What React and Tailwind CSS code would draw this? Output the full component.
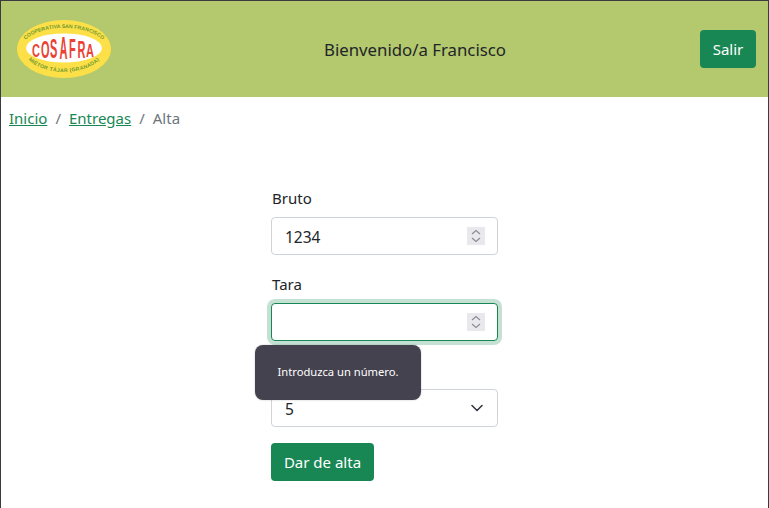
import React from "react";

const font = { fontFamily: '"Noto Sans", "Open Sans", sans-serif' };

const letters = [
  { c: "C", x: 16, y: 37.5, h: 13 },
  { c: "O", x: 25, y: 38.5, h: 17 },
  { c: "S", x: 34, y: 39, h: 20 },
  { c: "A", x: 43.5, y: 39.5, h: 22 },
  { c: "F", x: 53, y: 39, h: 20 },
  { c: "R", x: 61.5, y: 38.5, h: 17 },
  { c: "A", x: 70, y: 37.5, h: 13 },
];

function Logo() {
  return (
    <svg width="96" height="60" viewBox="0 0 96 60" className="block shrink-0">
      <defs>
        <path id="logoTop" d="M 6 29 A 42 20 0 0 1 90 29" fill="none" />
        <path id="logoBottom" d="M 8 30 A 40 23 0 0 0 88 30" fill="none" />
      </defs>
      <ellipse cx="48" cy="30" rx="47" ry="29" fill="#fde048" />
      <ellipse cx="48" cy="29" rx="38" ry="14.5" fill="#ffffff" />
      <text fontFamily="Liberation Sans, sans-serif" fontSize="5.2" fontWeight="700" fill="#6f9a30">
        <textPath href="#logoTop" startOffset="50%" textAnchor="middle">COOPERATIVA SAN FRANCISCO</textPath>
      </text>
      <text fontFamily="Liberation Sans, sans-serif" fontSize="5.2" fontWeight="700" fill="#6f9a30" letterSpacing="0.3">
        <textPath href="#logoBottom" startOffset="50%" textAnchor="middle">MIÉTOR TÁJAR (GRANADA)</textPath>
      </text>
      {letters.map((l, i) => (
        <text
          key={i}
          transform={`translate(${l.x} ${l.y}) scale(1.1 ${l.h / 7.16})`}
          fontFamily="Liberation Sans, sans-serif"
          fontSize="10"
          fontWeight="700"
          fill="#ea4335"
        >
          {l.c}
        </text>
      ))}
    </svg>
  );
}

function Spinner() {
  return (
    <span className="absolute right-[13px] top-[10px] flex h-[18px] w-[18px] items-center justify-center bg-[#e9e9ed] pointer-events-none">
      <svg width="12" height="14" viewBox="0 0 12 14" fill="none" stroke="#8a8a94" strokeWidth="1.1">
        <path d="M2 5 L6 1.5 L10 5" />
        <path d="M2 9 L6 12.5 L10 9" />
      </svg>
    </span>
  );
}

function NumberField({ label, value, focused }) {
  return (
    <div className="mb-[17px]">
      <label className="mb-[7px] block h-[24px] pl-px text-[15px] leading-6">{label}</label>
      <div className="relative">
        <input
          type="number"
          defaultValue={value}
          className={
            "block h-[38px] w-full rounded-[4px] border bg-white px-[13px] pt-[2px] text-[#212529] outline-none [appearance:textfield] " +
            (focused
              ? "border-[#198754] shadow-[0_0_0_4px_rgba(25,135,84,0.25)]"
              : "border-[#ced4da]")
          }
        />
        <Spinner />
      </div>
    </div>
  );
}

export default function App() {
  return (
    <div style={font} className="relative h-[508px] overflow-hidden border-x border-t border-[#3a3a40] bg-white text-[16px] text-[#212529]">
      <header className="flex h-[96px] items-center bg-[#b4c86d] pl-[15px] pr-[12px]">
        <Logo />
        <div className="mt-[2px] flex-1 pl-[18px] text-center text-[16.8px]">Bienvenido/a Francisco</div>
        <button className="h-[38px] w-[56px] rounded-[4px] bg-[#198754] text-[15px] text-white">Salir</button>
      </header>

      <nav className="flex h-[33px] px-[8px] pt-[9px] text-[15px] leading-6">
        <a href="#" className="text-[#198754] underline">Inicio</a>
        <span className="px-[8px] text-[#6c757d]">/</span>
        <a href="#" className="text-[#198754] underline">Entregas</a>
        <span className="px-[8px] text-[#6c757d]">/</span>
        <span className="text-[#6c757d]">Alta</span>
      </nav>

      <main className="ml-[270px] mt-[56px] w-[227px] text-[15.5px]">
        <form>
          <NumberField label="Bruto" value="1234" />
          <NumberField label="Tara" focused />
          <div className="mb-[16px]">
            <div className="mb-[7px] h-[24px]" />
            <div className="relative flex h-[38px] items-center rounded-[4px] border border-[#ced4da] bg-white px-[13px] pt-[3px]">
              <span>5</span>
              <svg className="absolute right-[12px] top-[10px]" width="16" height="16" viewBox="0 0 16 16" fill="none" stroke="#343a40" strokeWidth="1.6" strokeLinecap="round" strokeLinejoin="round">
                <path d="M3 5.5l5 5 5-5" />
              </svg>
            </div>
          </div>
          <button type="button" className="h-[38px] w-[103px] rounded-[4px] bg-[#198754] text-[15px] text-white">Dar de alta</button>
        </form>
      </main>

      <div className="absolute left-[254px] top-[344px] flex h-[55px] w-[166px] items-center justify-center rounded-[8px] bg-[#45424f] text-[11.2px] text-white shadow-[0_0_2px_rgba(0,0,0,0.25)]">
        Introduzca un número.
      </div>
    </div>
  );
}
